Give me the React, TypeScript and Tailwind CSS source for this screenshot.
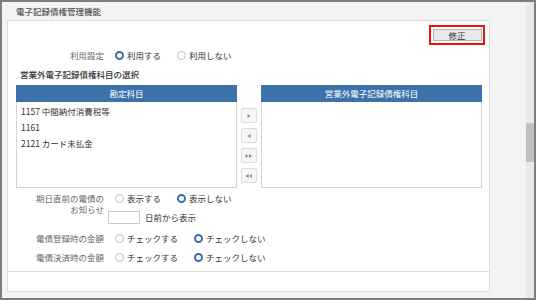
import React from 'react'

const font = {fontFamily: '"Noto Sans CJK JP", "Noto Sans", sans-serif'}

const Radio = ({checked}: {checked?: boolean}) => (
    <span
        className={checked
            ? 'inline-block h-[9px] w-[9px] shrink-0 rounded-full border-[2.5px] border-[#3a6ea7] bg-white'
            : 'inline-block h-[9px] w-[9px] shrink-0 rounded-full border border-[#bdbdbd] bg-white'}/>
)

const Option = ({label, checked}: {label: string, checked?: boolean}) => (
    <div className="flex items-center gap-[3px]">
        <Radio checked={checked}/>
        <span className="text-[#333]">{label}</span>
    </div>
)

const Arrow = ({dir, double}: {dir: 'r' | 'l', double?: boolean}) => {
    const one = (x: number) => dir === 'r'
        ? `M${x} 2 L${x + 3} 4 L${x} 6 Z`
        : `M${x + 3} 2 L${x} 4 L${x + 3} 6 Z`
    return (
        <div className="flex h-[15px] w-[16px] items-center justify-center rounded-[2px] border border-[#dcdcdc] bg-[#f6f6f6]">
            <svg width="8" height="8" viewBox="0 0 8 8">
                {double
                    ? <><path d={one(0.5)} fill="#8a8a8a"/><path d={one(4)} fill="#8a8a8a"/></>
                    : <path d={one(2.5)} fill="#8a8a8a"/>}
            </svg>
        </div>
    )
}

const Table = ({title, items}: {title: string, items: string[]}) => (
    <div className="flex h-[103px] w-[221px] flex-col">
        <div className="flex h-[17px] items-center justify-center bg-[#3b72a9] text-white">{title}</div>
        <div className="flex-1 border border-t-0 border-[#d4d4d4] bg-white pt-[1px]">
            {items.map(item => (
                <div key={item} className="flex h-[16px] items-center pl-[4px] text-[#333]">{item}</div>
            ))}
        </div>
    </div>
)

const App = () => {
    return (
        <div className="flex h-[300px] w-[536px] border-2 border-[#7d7d7d] bg-[#f3f3f3] text-[8.5px] leading-none"
             style={font}>
            <div className="flex flex-1 flex-col">
                <div className="flex h-[18px] items-center pl-[14px] font-medium text-[#555]">電子記録債権管理機能</div>
                <div className="ml-[5px] flex h-[272px] w-[483px] flex-col border border-[#dcdcdc] bg-white">
                    <div className="flex h-[251px] flex-col border-b border-[#dadada]">
                        <div className="flex justify-end pr-[4px] pt-[4px]">
                            <div className="flex h-[20px] w-[56px] items-center justify-center border-2 border-[#ee1111]">
                                <div className="flex h-[12px] w-[49px] items-center justify-center border border-[#b4b4b4] bg-[#e9e9e9] text-[#333]">修正</div>
                            </div>
                        </div>

                        <div className="mt-[3px] flex h-[14px] items-center">
                            <div className="w-[96px] text-right text-[#666]">利用設定</div>
                            <div className="ml-[4px] flex gap-[16px] pl-[7px]">
                                <Option label="利用する" checked/>
                                <Option label="利用しない"/>
                            </div>
                        </div>

                        <div className="mt-[6px] flex h-[12px] items-center pl-[12px] font-medium text-[#333]">営業外電子記録債権科目の選択</div>

                        <div className="mt-[5px] flex pl-[8px]">
                            <Table title="勘定科目" items={['1157 中間納付消費税等', '1161', '2121 カード未払金']}/>
                            <div className="mx-[4px] flex flex-col gap-[5px] pt-[23px]">
                                <Arrow dir="r"/>
                                <Arrow dir="l"/>
                                <Arrow dir="r" double/>
                                <Arrow dir="l" double/>
                            </div>
                            <Table title="営業外電子記録債権科目" items={[]}/>
                        </div>

                        <div className="mt-[5px] flex">
                            <div className="w-[96px] text-right leading-[11px] text-[#666]">期日直前の電債の<br/>お知らせ</div>
                            <div className="ml-[4px] flex flex-col">
                                <div className="flex h-[11px] items-center gap-[16px] pl-[7px]">
                                    <Option label="表示する"/>
                                    <Option label="表示しない" checked/>
                                </div>
                                <div className="mt-[7px] flex h-[13px] items-center gap-[5px]">
                                    <div className="h-[13px] w-[32px] border border-[#c8c8c8] bg-white"/>
                                    <span className="text-[#333]">日前から表示</span>
                                </div>
                            </div>
                        </div>

                        <div className="mt-[8px] flex h-[12px] items-center">
                            <div className="w-[96px] text-right text-[#666]">電債登録時の金額</div>
                            <div className="ml-[4px] flex gap-[16px] pl-[7px]">
                                <Option label="チェックする"/>
                                <Option label="チェックしない" checked/>
                            </div>
                        </div>

                        <div className="mt-[7px] flex h-[12px] items-center">
                            <div className="w-[96px] text-right text-[#666]">電債決済時の金額</div>
                            <div className="ml-[4px] flex gap-[16px] pl-[7px]">
                                <Option label="チェックする"/>
                                <Option label="チェックしない" checked/>
                            </div>
                        </div>
                    </div>
                    <div className="flex-1"/>
                </div>
            </div>
            <div className="w-[8px] bg-[#e9e9e9] pt-[121px]">
                <div className="h-[39px] w-[8px] bg-[#c1c1c1]"/>
            </div>
        </div>
    )
}

export default App
